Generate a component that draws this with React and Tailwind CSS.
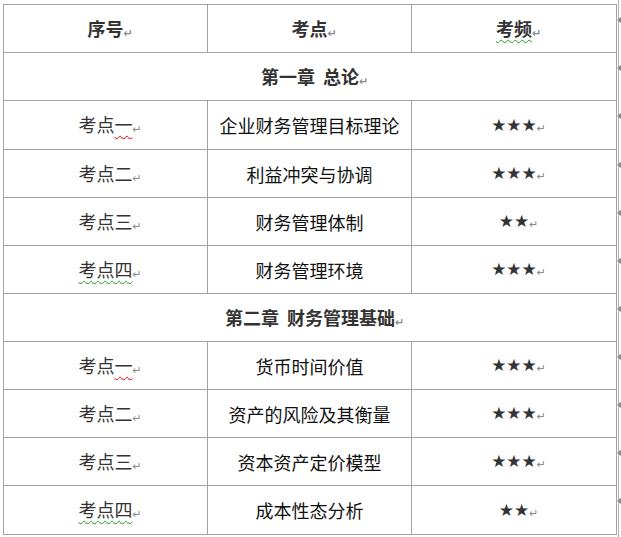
import React from 'react';

const rows = [
  { type: 'head', cells: ['序号', '考点', '考频'] },
  { type: 'chapter', title: '第一章\u00a0\u00a0总论' },
  { type: 'row', no: '考点一', name: '企业财务管理目标理论', stars: '★★★', tall: true },
  { type: 'row', no: '考点二', name: '利益冲突与协调', stars: '★★★' },
  { type: 'row', no: '考点三', name: '财务管理体制', stars: '★★' },
  { type: 'row', no: '考点四', name: '财务管理环境', stars: '★★★' },
  { type: 'chapter', title: '第二章\u00a0\u00a0财务管理基础' },
  { type: 'row', no: '考点一', name: '货币时间价值', stars: '★★★' },
  { type: 'row', no: '考点二', name: '资产的风险及其衡量', stars: '★★★' },
  { type: 'row', no: '考点三', name: '资本资产定价模型', stars: '★★★' },
  { type: 'row', no: '考点四', name: '成本性态分析', stars: '★★', tall: true },
];

// paragraph mark, takes no width so centering is on the text only
const Mark = () => (
  <span className="inline-block w-0 overflow-visible text-[11px] leading-none text-[#8a8a8a] align-[-1px]" style={{ fontFamily: '"DejaVu Sans", sans-serif' }}>
    ↵
  </span>
);

function No({ text }) {
  const base = text.slice(0, 2);
  const last = text.slice(2);
  if (last === '四') {
    return (
      <span className="underline decoration-wavy decoration-[#1f9d1f] decoration-1 underline-offset-[3px]">{text}</span>
    );
  }
  if (last === '一') {
    return (
      <>
        {base}
        <span className="underline decoration-wavy decoration-[#e00000] decoration-1 underline-offset-[3px]">{last}</span>
      </>
    );
  }
  return text;
}

export default function App() {
  return (
    <div className="relative h-[537px] w-[621px] bg-white pt-[4px] pl-[3px] overflow-hidden" style={{ fontFamily: '"Noto Sans CJK SC", "Noto Sans", sans-serif' }}>
      <div className="absolute top-0 bottom-0 left-[618px] w-px bg-[#b0b0b0]" />
      <div className="w-[614px] border-t border-l border-r border-[#a3a3a3]">
        {rows.map((r, i) => (
          <div key={i} className={`relative flex border-b border-[#a3a3a3] text-[18px] leading-none ${r.tall ? 'h-[49px]' : 'h-[48px]'}`}>
            {r.type === 'head' &&
              r.cells.map((c, j) => (
                <div key={j} className={`flex w-[204px] items-center justify-center font-bold text-[#333] ${j < 2 ? 'border-r border-[#a3a3a3]' : ''}`}>
                  <span>
                    {j === 2 ? (
                      <span className="underline decoration-wavy decoration-[#1f9d1f] decoration-1 underline-offset-[3px]">{c}</span>
                    ) : (
                      c
                    )}
                    <Mark />
                  </span>
                </div>
              ))}
            {r.type === 'chapter' && (
              <div className="flex flex-1 items-center justify-center font-bold text-[#333]">
                <span>
                  {r.title}
                  <Mark />
                </span>
              </div>
            )}
            {r.type === 'row' && (
              <>
                <div className="flex w-[204px] items-center justify-center border-r border-[#a3a3a3] text-[#333]">
                  <span>
                    <No text={r.no} />
                    <Mark />
                  </span>
                </div>
                <div className="flex w-[204px] items-center justify-center border-r border-[#a3a3a3] text-[#111]">
                  <span>{r.name}</span>
                </div>
                <div className="flex w-[204px] items-center justify-center text-[#333]">
                  <span className="text-[17px]" style={{ fontFamily: '"DejaVu Sans", sans-serif' }}>
                    {r.stars}
                    <Mark />
                  </span>
                </div>
              </>
            )}
            <span className="absolute top-[12px] left-[613px] h-0 w-0 border-y-[3px] border-r-[4px] border-y-transparent border-r-[#8a8a8a]" />
          </div>
        ))}
      </div>
    </div>
  );
}
